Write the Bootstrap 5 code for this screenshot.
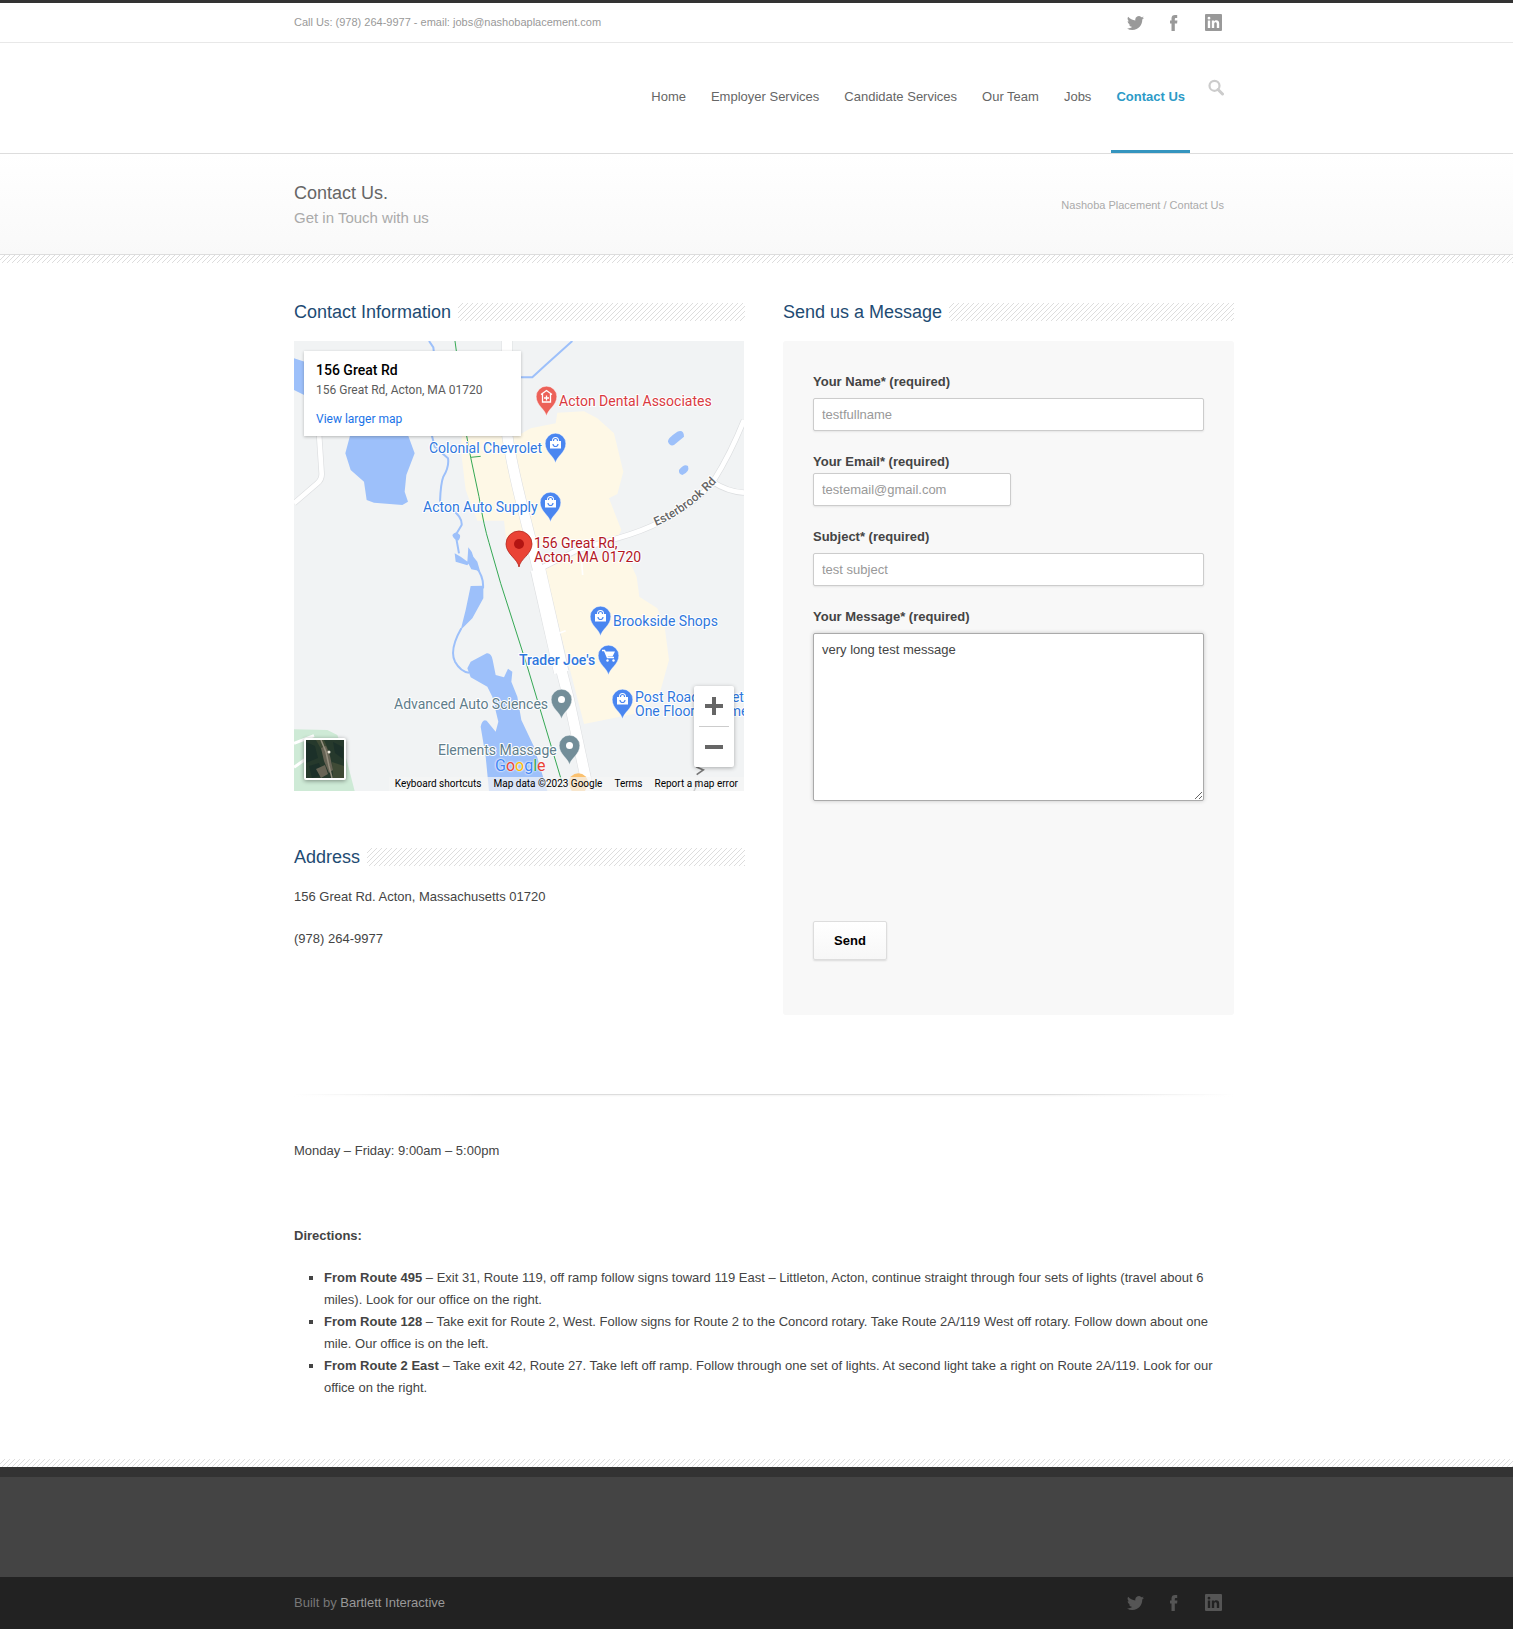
<!DOCTYPE html>
<html lang="en">
<head>
<meta charset="utf-8">
<meta name="viewport" content="width=device-width, initial-scale=1">
<title>Contact Us - Nashoba Placement</title>
<link href="https://cdn.jsdelivr.net/npm/bootstrap@5.3.0/dist/css/bootstrap.min.css" rel="stylesheet">
<style>
  body { font-family: "Liberation Sans", Arial, sans-serif; font-size: 13px; line-height: 22px; color: #444; }
  a { color: inherit; text-decoration: none; }
  p { margin-bottom: 20px; }
  .site-wrap { width: 100%; max-width: 955px; margin: 0 auto; padding-left: 15px; }
  .head-inner { padding-right: 10px; }
  .hatch { background: linear-gradient(135deg, #ddd 10%, #fff 10%, #fff 50%, #ddd 50%, #ddd 60%, #fff 60%) 0 0 / 5px 5px; }

  .top-bar { border-top: 3px solid #333; border-bottom: 1px solid #e8e8e8; font-size: 11px; color: #999; height: 43px; }
  .top-bar .head-inner > span { padding-bottom: 2px; }
  .social { gap: 22px; padding-right: 2px; color: #999; }
  .social svg, .search-btn svg { display: block; }

  .site-header { height: 111px; border-bottom: 1px solid #ddd; }
  .main-menu { gap: 15px; }
  .main-menu .nav-link { padding: 43px 5px 42px; color: #666; border-bottom: 3px solid transparent; }
  .main-menu .nav-link.active { color: #2c9ac7; font-weight: 700; border-color: #3595bf; }
  .search-btn { margin: 36px 0 0 18px; padding: 0; border: 0; background: none; color: #ccc; }

  .page-title { height: 101px; padding-top: 2px; border-bottom: 1px solid #ddd; background: linear-gradient(#fff, #f9f9f9); }
  .page-title h1 { font-size: 18px; line-height: 26px; margin: 0; color: #666; }
  .page-title h2 { font-size: 15px; line-height: 24px; margin: 0; color: #aaa; }
  .crumbs { font-size: 11px; color: #aaa; }
  .strip { height: 8px; }

  .main-area { padding-top: 38px; }
  .main-area .row { --bs-gutter-x: 38px; }
  .headline { font-size: 18px; line-height: 22px; margin: 0 0 18px; color: #1e4b73; gap: 7px; }
  .headline .hatch { height: 18px; }

  .map-box { aspect-ratio: 1; width: 100%; max-width: 450px; margin-bottom: 55px; overflow: hidden; font-family: Roboto, sans-serif; background: #f1f3f4; }
  .map-box > svg { display: block; width: 100%; height: 100%; }
  .place { font-size: 14px; paint-order: stroke; stroke: #fff; stroke-width: 2px; stroke-linejoin: round; }
  .map-info { top: 10px; left: 10px; width: 217px; height: 85px; padding: 9px 12px; background: #fff; box-shadow: 0 1px 3px rgba(0,0,0,.25); font-size: 12px; line-height: 20px; color: #5b5b5b; }
  .map-info strong { font-size: 14px; font-weight: 500; line-height: 20px; color: #000; }
  .map-info a { color: #1a73e8; margin-top: 9px; }
  .map-thumb { left: 10px; bottom: 11px; width: 42px; height: 42px; padding: 0; border: 2px solid #fff; border-radius: 2px; overflow: hidden; box-shadow: 0 1px 4px rgba(0,0,0,.4); }
  .map-thumb svg { display: block; }
  .map-zoom { right: 10px; bottom: 24px; width: 40px; background: #fff; border-radius: 2px; box-shadow: 0 1px 4px rgba(0,0,0,.3); }
  .map-zoom button { height: 40px; border: 0; background: none; padding: 0 0 2px; }
  .map-zoom hr { margin: 0 5px; color: #ccc; opacity: 1; }
  .map-logo { left: 201px; bottom: 14px; font-size: 16px; line-height: 22px; text-shadow: 0 0 2px #fff, 0 0 2px #fff; }
  .map-legal { right: 0; bottom: 0; font-size: 10px; line-height: 14px; color: #000; background: rgba(245,245,245,.7); gap: 12px; padding: 0 6px; white-space: nowrap; }

  .form-panel { background: #f8f8f8; border-radius: 3px; padding: 30px 30px 55px; }
  .form-panel label { font-weight: 700; display: block; }
  .field { margin-bottom: 20px; }
  .field.spaced label { margin-bottom: 5px; }
  .form-panel .form-control { font-size: 13px; line-height: 15px; height: 33px; padding: 8px; border: 1px solid #ccc; border-radius: 2px; color: #999; box-shadow: 0 1px 2px rgba(0,0,0,.08); }
  .form-panel textarea.form-control { height: 168px; color: #444; border-color: #aaa; box-shadow: 0 0 4px rgba(0,0,0,.2); }
  .form-panel .mail-field { width: 198px; }
  .send-btn { margin-top: 120px; width: 74px; height: 39px; padding: 0; font-size: 13px; font-weight: 700; color: #000; border: 1px solid #ddd; border-radius: 2px; background: linear-gradient(#fff, #f7f7f7); box-shadow: 0 1px 2px rgba(0,0,0,.12); }

  .fade-rule { height: 3px; margin: 79px 0 43px; background: linear-gradient(90deg, #fff, transparent 20%, transparent 80%, #fff), linear-gradient(#ddd 1px, #f3f3f3 1px, #fff); }
  .directions-title { margin-top: 63px; }
  .directions { list-style: square; padding-left: 30px; margin-bottom: 60px; }

  .foot-top { height: 110px; background: #444; border-top: 10px solid #333; }
  .foot-bar { height: 52px; background: #222; color: #777; }
  .foot-bar a { color: #999; }
  .foot-bar .social, .foot-bar .social a { color: #555; }
  .foot-bar .social { padding-bottom: 2px; }
</style>
</head>
<body>
<svg class="d-none" aria-hidden="true">
  <symbol id="i-tw" viewBox="0 0 17 17"><path transform="scale(1.0625)" d="M5.026 15c6.038 0 9.341-5.003 9.341-9.334q.002-.211-.006-.422A6.7 6.7 0 0 0 16 3.542a6.700 6.700 0 0 1-1.889.518 3.300 3.300 0 0 0 1.447-1.817 6.500 6.500 0 0 1-2.087.793A3.286 3.286 0 0 0 7.875 6.030a9.320 9.320 0 0 1-6.767-3.429 3.290 3.290 0 0 0 1.018 4.382A3.300 3.300 0 0 1 .640 6.575v.045a3.290 3.290 0 0 0 2.632 3.218 3.200 3.200 0 0 1-.865.115 3 3 0 0 1-.614-.057 3.280 3.280 0 0 0 3.067 2.277A6.600 6.600 0 0 1 .780 13.580a6 6 0 0 1-.780-.045A9.340 9.340 0 0 0 5.026 15"/></symbol>
  <symbol id="i-fb" viewBox="0 0 17 17"><path d="M5.500 17.500V9.500H4V6.500h1.500V4.500C5.500 2 6.800 1 9 1h2.200v3H10c-.900 0-1.200.400-1.200 1.200v1.300h2.600l-.300 3H8.800v8z"/></symbol>
  <symbol id="i-in" viewBox="0 0 17 17"><path fill-rule="evenodd" d="M1 0h15a1 1 0 0 1 1 1v15a1 1 0 0 1-1 1H1a1 1 0 0 1-1-1V1a1 1 0 0 1 1-1zM2.800 6.500V14h2.400V6.500zM4 2.800a1.400 1.400 0 1 0 0 2.800 1.400 1.400 0 0 0 0-2.800zM6.800 6.500V14h2.400v-4c0-1.200.500-1.700 1.400-1.700s1.200.700 1.200 1.700v4h2.400V9.500c0-2.200-1.200-3.200-2.800-3.200-1.100 0-1.800.500-2.200 1.200v-1z"/></symbol>
  <symbol id="m-pin" viewBox="-12 -12 24 34" overflow="visible"><path stroke="#fff" stroke-width=".4" d="M0 19.500C-1 13-10.300 9-10.300 0a10.300 10.300 0 1 1 20.600 0C10.300 9 1 13 0 19.500z"/></symbol>
  <symbol id="m-bag" viewBox="-12 -12 24 34" overflow="visible"><path fill="#fff" d="M-5.500-2.500h2V-3a3.500 3.500 0 0 1 7 0v.500h2v7.500h-11z"/><path fill="none" stroke="#4a86f0" stroke-width="1.200" d="M-2-2.500V-3a2 2 0 0 1 4 0v.500M-2.500.500a2.500 2.500 0 0 0 5 0"/></symbol>
</svg>

<div class="top-bar">
  <div class="site-wrap h-100">
    <div class="head-inner d-flex justify-content-between align-items-center h-100">
      <span>Call Us: (978) 264-9977 - email: jobs@nashobaplacement.com</span>
      <div class="social d-flex">
        <a href="#" aria-label="Twitter"><svg width="17" height="17" fill="currentColor"><use href="#i-tw"/></svg></a>
        <a href="#" aria-label="Facebook"><svg width="17" height="17" fill="currentColor"><use href="#i-fb"/></svg></a>
        <a href="#" aria-label="LinkedIn"><svg width="17" height="17" fill="currentColor"><use href="#i-in"/></svg></a>
      </div>
    </div>
  </div>
</div>

<header class="site-header">
  <div class="site-wrap">
    <div class="head-inner d-flex justify-content-end align-items-start">
      <nav class="nav main-menu">
        <a class="nav-link" href="#">Home</a>
        <a class="nav-link" href="#">Employer Services</a>
        <a class="nav-link" href="#">Candidate Services</a>
        <a class="nav-link" href="#">Our Team</a>
        <a class="nav-link" href="#">Jobs</a>
        <a class="nav-link active" href="#" aria-current="page">Contact Us</a>
      </nav>
      <button class="search-btn" type="button" aria-label="Search"><svg width="16" height="17" viewBox="0 0 16 17" fill="none" stroke="currentColor"><circle cx="6.500" cy="6.800" r="5" stroke-width="2.200"/><path d="M10 10.500l4.500 4.500" stroke-width="3" stroke-linecap="round"/></svg></button>
    </div>
  </div>
</header>

<section class="page-title">
  <div class="site-wrap h-100">
    <div class="head-inner d-flex justify-content-between align-items-center h-100">
      <div>
        <h1>Contact Us.</h1>
        <h2>Get in Touch with us</h2>
      </div>
      <nav class="crumbs" aria-label="Breadcrumb"><a href="#">Nashoba Placement</a> / Contact Us</nav>
    </div>
  </div>
</section>
<div class="strip hatch"></div>

<main class="main-area site-wrap">
  <div class="row">
    <div class="col-6">
      <h3 class="headline d-flex align-items-center">Contact Information<span class="hatch flex-grow-1"></span></h3>
      <div class="map-box position-relative">
        <svg viewBox="0 0 450 450" role="img" aria-label="Map of 156 Great Rd, Acton">
          <g transform="translate(-10 -51) scale(.333333)">
            <path fill="#fef8e6" d="M535 430L530 475 545 600 580 692 660 692 668 760 760 765 1000 745 1012 720 975 625 1000 612 1018 545 990 430 940 385 900 364 820 368 815 400 740 415 700 438zM780 838L890 790 1040 822 1058 860 1066 920 1120 955 1142 1010 1155 1110 1130 1200 1060 1270 900 1302z"/>
            <path fill="#ceead6" d="M30 1318L130 1320 160 1335 188 1410 212 1503H30z"/>
            <path fill="none" stroke="#fff" stroke-width="9" d="M30 1360L90 1337M30 1432L75 1400"/>
            <g fill="#9dc0fa">
              <path d="M30 205L62 215V316L30 300zM200 430L184 490 200 540 240 575 248 630 270 638 355 645 372 635 362 605 367 555 392 490 370 430z"/>
              <path d="M1152 455Q1150 445 1180 425 1200 418 1200 440L1170 465Q1158 470 1152 455zM1185 540Q1200 520 1212 528 1218 545 1195 555 1183 552 1185 540z"/>
              <path d="M505 735Q515 720 528 735 530 745 522 752 508 748 505 735zM553 772Q565 785 568 800L580 815 588 843 562 838 550 815zM512 790L530 800 555 818 550 826 515 815zM560 888L598 887 598 925 565 985 530 1020 545 960z"/>
              <path d="M550 1135L560 1115 608 1090Q622 1088 626 1110L635 1155 660 1162 672 1136 685 1145 682 1175 700 1220 712 1290 750 1370 790 1503H615L605 1400 590 1310Q595 1285 608 1292L635 1325 643 1295 625 1220 610 1190 560 1162z"/>
            </g>
            <path fill="none" stroke="#9dc0fa" stroke-width="6" d="M435 153L448 172 450 190M442 430L452 470 492 505Q496 530 478 560 470 580 468 635M500 655Q535 680 533 705L515 735 525 790M575 830Q600 860 597 895M532 1015Q495 1080 513 1115 530 1145 555 1148M705 262H745L785 225 865 153"/>
            <g fill="none" stroke-linejoin="round">
              <path stroke="#dcdee0" stroke-width="18" d="M30 640L100 580Q114 568 113 550L105 430M770 835L880 780 1000 745Q1080 722 1130 695 1240 640 1290 570 1340 490 1380 390M1285 575Q1330 605 1380 608"/>
              <path stroke="#dcdee0" stroke-width="34" d="M669 150V430Q680 510 715 650L760 830 790 960 832 1140 855 1230 915 1510"/>
              <path stroke="#dcdee0" stroke-width="47" d="M762 840L832 1145"/>
              <path stroke="#fff" stroke-width="14" d="M30 640L100 580Q114 568 113 550L105 430M770 835L880 780 1000 745Q1080 722 1130 695 1240 640 1290 570 1340 490 1380 390M1285 575Q1330 605 1380 608"/>
              <path stroke="#fff" stroke-width="31" d="M669 150V430Q680 510 715 650L760 830 790 960 832 1140 855 1230 915 1510"/>
              <path stroke="#fff" stroke-width="44" d="M762 838L832 1147"/>
              <path stroke="#fff" stroke-width="5" d="M892 800L896 855M845 1022L825 1030"/>
              <path stroke="#34a853" stroke-width="3" d="M513 153L518 190 548 438 560 502 585 620Q600 710 615 758L650 880 730 1130 835 1480M560 502L590 499"/>
            </g>
            <path fill="#fbc16f" d="M853 1480a30 30 0 0 1 60 0l-10 23h-40z"/>
            <path fill="none" stroke="#777" stroke-width="5" d="M1236 1430L1258 1440 1238 1454M1230 1503L1245 1470"/>
          </g>
          <path id="ester" fill="none" d="M362 185Q396 171 429 134"/>
          <text class="place" fill="#666" font-weight="500" style="font-size:12px"><textPath href="#ester">Esterbrook Rd</textPath></text>
          <g class="place" fill="#d93a3f"><text x="265" y="65">Acton Dental Associates</text></g>
          <g class="place" fill="#2f77dd">
            <text x="135" y="112">Colonial Chevrolet</text>
            <text x="129" y="171">Acton Auto Supply</text>
            <text x="319" y="285">Brookside Shops</text>
            <text x="225" y="324" font-weight="500">Trader Joe's</text>
            <text x="341" y="361">Post Road Carpet</text>
            <text x="341" y="375">One Floor &amp; Home</text>
          </g>
          <g class="place" fill="#607d8b"><text x="100" y="368">Advanced Auto Sciences</text><text x="144" y="414">Elements Massage</text></g>
          <g class="place" fill="#b3171f"><text x="240" y="207">156 Great Rd,</text><text x="240" y="221">Acton, MA 01720</text></g>

          <g transform="translate(.5 .5)">
            <g fill="#4a86f0">
              <use href="#m-pin" x="249" y="90" width="24" height="34"/><use href="#m-pin" x="244" y="149" width="24" height="34"/>
              <use href="#m-pin" x="294" y="263" width="24" height="34"/><use href="#m-pin" x="302" y="302" width="24" height="34"/>
              <use href="#m-pin" x="316" y="346" width="24" height="34"/>
            </g>
            <use href="#m-bag" x="249" y="90" width="24" height="34"/><use href="#m-bag" x="244" y="149" width="24" height="34"/>
            <use href="#m-bag" x="294" y="263" width="24" height="34"/><use href="#m-bag" x="316" y="346" width="24" height="34"/>
            <path fill="none" stroke="#fff" stroke-width="1.500" d="M307.500 309h2.500l3 7h6.500"/><path fill="#fff" d="M310.500 310h10l-2.500 5h-5.500z"/><circle cx="313" cy="319" r="1.200" fill="#fff"/><circle cx="319" cy="319" r="1.200" fill="#fff"/>
            <g fill="#738e99"><use href="#m-pin" x="255" y="346" width="24" height="34"/><use href="#m-pin" x="263" y="392" width="24" height="34"/></g>
            <circle cx="267" cy="358" r="3.500" fill="#fff"/><circle cx="275" cy="404" r="3.500" fill="#fff"/>
            <g fill="#ec6158"><use href="#m-pin" x="240" y="43" width="24" height="34"/></g>
            <path fill="none" stroke="#fff" stroke-width="1.300" d="M246.500 53l5.500-4 5.500 4M248 52.500v8h8v-8M252 54v5M249.500 56.500h5"/>
          </g>
          <path fill="#ea4335" stroke="#b3261e" stroke-width=".8" d="M225 226c-1-8-13-13-13-23a13 13 0 1 1 26 0c0 10-12 15-13 23z"/><circle cx="225" cy="203" r="5" fill="#b31412"/>
        </svg>
        <div class="map-info position-absolute d-flex flex-column">
          <strong>156 Great Rd</strong>
          <span>156 Great Rd, Acton, MA 01720</span>
          <a href="#">View larger map</a>
        </div>
        <button class="map-thumb position-absolute" type="button" aria-label="Show satellite imagery">
          <svg width="38" height="38" viewBox="0 0 38 38"><path fill="#26392c" d="M0 0h38v38H0z"/><path fill="#1c3029" d="M0 2l9 4 3 12-12 5zM3 26l10-3 5 12-12 3zM27 2l10 5v12l-8-6z"/><path fill="#3f4a35" d="M10 0h8l6 14-5 2zM26 22l12 4v12H27z"/><path fill="#676455" d="M15 8l5-2 4 10 3 14-4 3-5-12zM10 29l9-4 3 9-7 4z"/><path fill="none" stroke="#948e7e" stroke-width="1.500" d="M15 0l5 12 3 14 3 12"/><circle cx="23" cy="12" r="1.500" fill="#ece8dc"/></svg>
        </button>
        <div class="map-zoom position-absolute d-flex flex-column">
          <button type="button" aria-label="Zoom in"><svg width="18" height="18" viewBox="0 0 18 18" fill="#666"><path d="M7 0h4v7h7v4h-7v7H7v-7H0V7h7z"/></svg></button>
          <hr>
          <button type="button" aria-label="Zoom out"><svg width="18" height="18" viewBox="0 0 18 18" fill="#666"><path d="M0 7h18v4H0z"/></svg></button>
        </div>
        <a class="map-logo position-absolute" href="#" aria-label="Google"><span style="color:#4285f4">G</span><span style="color:#ea4335">o</span><span style="color:#fbbc04">o</span><span style="color:#4285f4">g</span><span style="color:#34a853">l</span><span style="color:#ea4335">e</span></a>
        <div class="map-legal position-absolute d-flex">
          <a href="#">Keyboard shortcuts</a><span>Map data ©2023 Google</span><a href="#">Terms</a><a href="#">Report a map error</a>
        </div>
      </div>

      <h3 class="headline d-flex align-items-center">Address<span class="hatch flex-grow-1"></span></h3>
      <p>156 Great Rd. Acton, Massachusetts 01720</p>
      <p>(978) 264-9977</p>
    </div>

    <div class="col-6">
      <h3 class="headline d-flex align-items-center">Send us a Message<span class="hatch flex-grow-1"></span></h3>
      <form class="form-panel">
        <div class="field spaced"><label for="f-name">Your Name* (required)</label><input class="form-control" id="f-name" type="text" value="testfullname"></div>
        <div class="field"><label for="f-mail">Your Email* (required)</label><input class="form-control mail-field" id="f-mail" type="email" value="testemail@gmail.com"></div>
        <div class="field spaced"><label for="f-subj">Subject* (required)</label><input class="form-control" id="f-subj" type="text" value="test subject"></div>
        <div class="field spaced"><label for="f-msg">Your Message* (required)</label><textarea class="form-control" id="f-msg">very long test message</textarea></div>
        <button class="send-btn d-block" type="submit">Send</button>
      </form>
    </div>
  </div>

  <div class="fade-rule"></div>
  <p>Monday – Friday: 9:00am – 5:00pm</p>
  <p class="directions-title"><strong>Directions:</strong></p>
  <ul class="directions">
    <li><strong>From Route 495</strong> – Exit 31, Route 119, off ramp follow signs toward 119 East – Littleton, Acton, continue straight through four sets of lights (travel about 6 miles). Look for our office on the right.</li>
    <li><strong>From Route 128</strong> – Take exit for Route 2, West. Follow signs for Route 2 to the Concord rotary. Take Route 2A/119 West off rotary. Follow down about one mile. Our office is on the left.</li>
    <li><strong>From Route 2 East</strong> – Take exit 42, Route 27. Take left off ramp. Follow through one set of lights. At second light take a right on Route 2A/119. Look for our office on the right.</li>
  </ul>
</main>

<div class="strip hatch"></div>
<footer>
  <div class="foot-top"></div>
  <div class="foot-bar">
    <div class="site-wrap h-100">
      <div class="head-inner d-flex justify-content-between align-items-center h-100">
        <span>Built by <a href="#">Bartlett Interactive</a></span>
        <div class="social d-flex">
          <a href="#" aria-label="Twitter"><svg width="17" height="17" fill="currentColor"><use href="#i-tw"/></svg></a>
          <a href="#" aria-label="Facebook"><svg width="17" height="17" fill="currentColor"><use href="#i-fb"/></svg></a>
          <a href="#" aria-label="LinkedIn"><svg width="17" height="17" fill="currentColor"><use href="#i-in"/></svg></a>
        </div>
      </div>
    </div>
  </div>
</footer>
<script src="https://cdn.jsdelivr.net/npm/bootstrap@5.3.0/dist/js/bootstrap.bundle.min.js"></script>
</body>
</html>
